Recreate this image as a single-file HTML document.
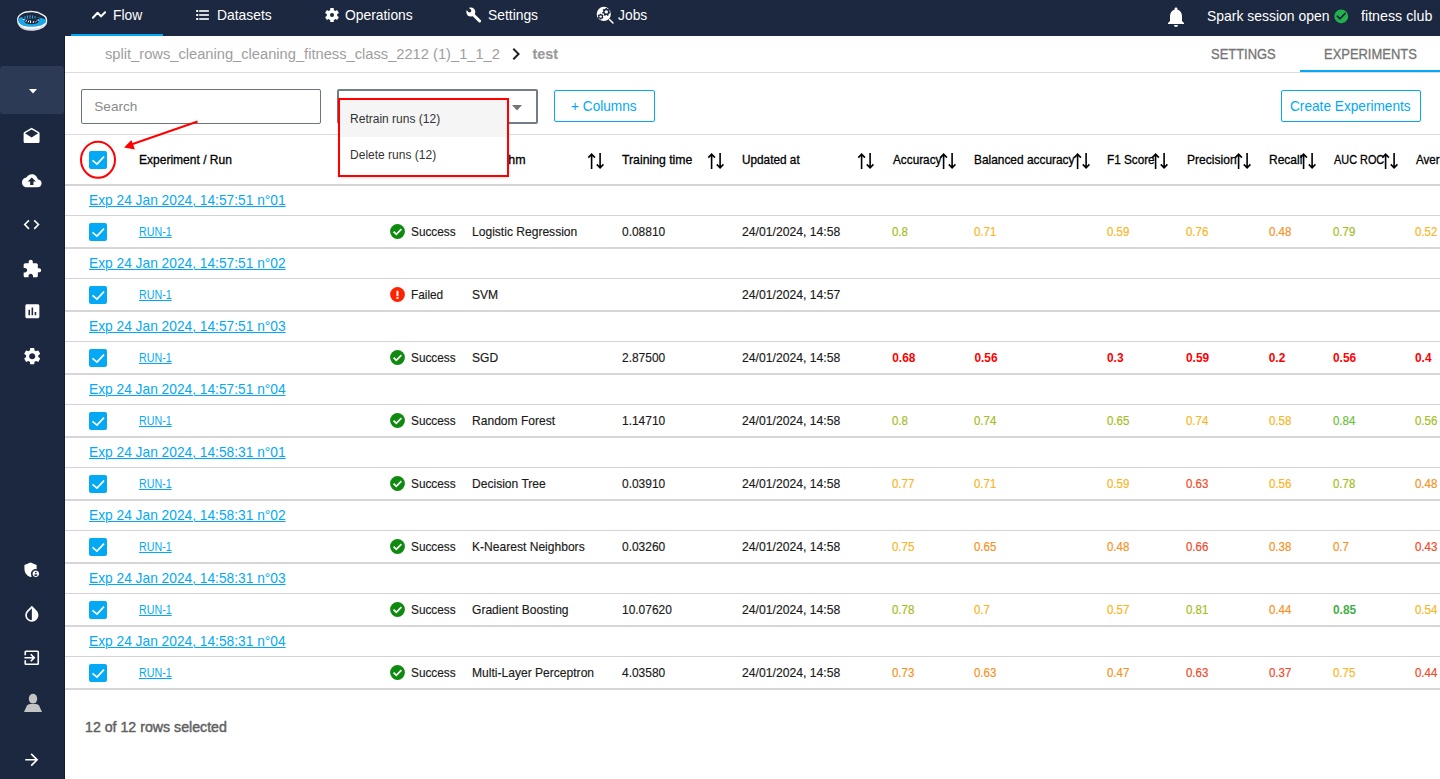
<!DOCTYPE html><html><head><meta charset="utf-8"><style>
*{box-sizing:border-box;margin:0;padding:0}
html,body{width:1440px;height:779px;overflow:hidden;background:#fff;font-family:"Liberation Sans",sans-serif}
.t{position:absolute;white-space:nowrap}
.a{position:absolute}
.hl{position:absolute;left:65px;width:1375px;background:#d6d6d6}
u{text-decoration:underline;text-underline-offset:1px;text-decoration-thickness:1px}
svg{position:absolute;overflow:visible}
</style></head><body>
<div class="a" style="left:0;top:0;width:1440px;height:36px;background:#1c2840"></div>
<div class="a" style="left:0;top:0;width:65px;height:779px;background:#1c2840"></div>
<div class="a" style="left:64px;top:36px;width:1px;height:743px;background:#141d30"></div>
<div class="a" style="left:0;top:66px;width:64px;height:48px;background:#2c3a56;border-radius:3px"></div>
<div class="a" style="left:71px;top:34px;width:92px;height:2px;background:#03a9f4"></div>
<div class="t" style="left:112.8px;top:5px;font-size:14.5px;line-height:20px;color:#fff;font-weight:normal;transform:scaleX(0.955);transform-origin:0 0;">Flow</div>
<div class="t" style="left:217.0px;top:5px;font-size:14.5px;line-height:20px;color:#fff;font-weight:normal;transform:scaleX(0.955);transform-origin:0 0;">Datasets</div>
<div class="t" style="left:345.25px;top:5px;font-size:14.5px;line-height:20px;color:#fff;font-weight:normal;transform:scaleX(0.955);transform-origin:0 0;">Operations</div>
<div class="t" style="left:487.5px;top:5px;font-size:14.5px;line-height:20px;color:#fff;font-weight:normal;transform:scaleX(0.955);transform-origin:0 0;">Settings</div>
<div class="t" style="left:618.25px;top:5px;font-size:14.5px;line-height:20px;color:#fff;font-weight:normal;transform:scaleX(0.955);transform-origin:0 0;">Jobs</div>
<div class="t" style="left:1207.2px;top:6px;font-size:14.5px;line-height:20px;color:#fff;font-weight:normal;transform:scaleX(0.962);transform-origin:0 0;">Spark session open</div>
<div class="t" style="left:1361.2px;top:6px;font-size:14.5px;line-height:20px;color:#fff;font-weight:normal;transform:scaleX(0.983);transform-origin:0 0;">fitness club</div>
<div class="t" style="left:105px;top:44px;font-size:15.5px;line-height:20px;color:#9e9e9e;font-weight:normal;transform:scaleX(0.947);transform-origin:0 0;">split_rows_cleaning_cleaning_fitness_class_2212 (1)_1_1_2</div>
<div class="t" style="left:532.5px;top:44px;font-size:14.3px;line-height:20px;color:#999;font-weight:bold;-webkit-text-stroke:0.15px #999;">test</div>
<div class="t" style="left:1210.8px;top:45px;font-size:13.8px;line-height:20px;color:#757575;font-weight:normal;-webkit-text-stroke:0.3px #757575;transform:scaleX(0.938);transform-origin:0 0;">SETTINGS</div>
<div class="t" style="left:1324.2px;top:45px;font-size:13.8px;line-height:20px;color:#757575;font-weight:normal;-webkit-text-stroke:0.3px #757575;transform:scaleX(0.938);transform-origin:0 0;">EXPERIMENTS</div>
<div class="a" style="left:1300px;top:70px;width:140px;height:2px;background:#03a9f4"></div>
<div class="hl" style="top:72px;height:1px;background:#dcdcdc"></div>
<div class="a" style="left:81px;top:89px;width:240px;height:35px;border:1px solid #6b757d;border-radius:2px"></div>
<div class="t" style="left:94.3px;top:97px;font-size:13.6px;line-height:20px;color:#8a8a8a;font-weight:normal;">Search</div>
<div class="a" style="left:337px;top:89px;width:201px;height:35px;border:2px solid #737d85;border-radius:2px"></div>
<svg style="left:511.5px;top:104.7px" width="10" height="6"><path d="M0 0h10L5 5.5z" fill="#757575"/></svg>
<div class="a" style="left:554px;top:90px;width:101px;height:32px;border:1px solid #03a9f4;border-radius:2px"></div>
<div class="t" style="left:570.75px;top:96px;font-size:14.3px;line-height:20px;color:#03a9f4;font-weight:normal;transform:scaleX(0.955);transform-origin:0 0;">+ Columns</div>
<div class="a" style="left:1281px;top:90px;width:140px;height:32px;border:1px solid #03a9f4;border-radius:2px"></div>
<div class="t" style="left:1290px;top:96px;font-size:14.3px;line-height:20px;color:#03a9f4;font-weight:normal;transform:scaleX(0.955);transform-origin:0 0;">Create Experiments</div>
<div class="hl" style="top:134px;height:1px;background:#dcdcdc"></div>
<div class="t" style="left:139.1px;top:150px;font-size:12.6px;line-height:20px;color:#000;font-weight:normal;-webkit-text-stroke:0.3px #000;transform:scaleX(0.9548);transform-origin:0 0;">Experiment / Run</div>
<div class="t" style="left:472.5px;top:150px;font-size:12.6px;line-height:20px;color:#000;font-weight:normal;-webkit-text-stroke:0.3px #000;transform:scaleX(0.9881);transform-origin:0 0;">Algorithm</div>
<div class="t" style="left:621.75px;top:150px;font-size:12.6px;line-height:20px;color:#000;font-weight:normal;-webkit-text-stroke:0.3px #000;transform:scaleX(0.9722);transform-origin:0 0;">Training time</div>
<div class="t" style="left:742px;top:150px;font-size:12.6px;line-height:20px;color:#000;font-weight:normal;-webkit-text-stroke:0.3px #000;transform:scaleX(0.9357);transform-origin:0 0;">Updated at</div>
<div class="t" style="left:892.5px;top:150px;font-size:12.6px;line-height:20px;color:#000;font-weight:normal;-webkit-text-stroke:0.3px #000;transform:scaleX(0.9349);transform-origin:0 0;">Accuracy</div>
<div class="t" style="left:974.2px;top:150px;font-size:12.6px;line-height:20px;color:#000;font-weight:normal;-webkit-text-stroke:0.3px #000;transform:scaleX(0.9444);transform-origin:0 0;">Balanced accuracy</div>
<div class="t" style="left:1107.1px;top:150px;font-size:12.6px;line-height:20px;color:#000;font-weight:normal;-webkit-text-stroke:0.3px #000;transform:scaleX(0.9317);transform-origin:0 0;">F1 Score</div>
<div class="t" style="left:1186.6px;top:150px;font-size:12.6px;line-height:20px;color:#000;font-weight:normal;-webkit-text-stroke:0.3px #000;transform:scaleX(0.9587);transform-origin:0 0;">Precision</div>
<div class="t" style="left:1268.8px;top:150px;font-size:12.6px;line-height:20px;color:#000;font-weight:normal;-webkit-text-stroke:0.3px #000;transform:scaleX(0.9532);transform-origin:0 0;">Recall</div>
<div class="t" style="left:1334px;top:150px;font-size:12.6px;line-height:20px;color:#000;font-weight:normal;-webkit-text-stroke:0.3px #000;transform:scaleX(0.8651);transform-origin:0 0;">AUC ROC</div>
<div class="t" style="left:1416px;top:150px;font-size:12.6px;line-height:20px;color:#000;font-weight:normal;-webkit-text-stroke:0.3px #000;transform:scaleX(0.923);transform-origin:0 0;">Average</div>
<svg style="left:587.7px;top:153px" width="16" height="16" viewBox="0 0 16 16"><path d="M3.6 1v15M0.3 4.6L3.6 1.2L6.9 4.6M12.1 0v15M8.8 11.4L12.1 14.8L15.4 11.4" stroke="#000" stroke-width="1.6" fill="none"/></svg>
<svg style="left:707.8px;top:153px" width="16" height="16" viewBox="0 0 16 16"><path d="M3.6 1v15M0.3 4.6L3.6 1.2L6.9 4.6M12.1 0v15M8.8 11.4L12.1 14.8L15.4 11.4" stroke="#000" stroke-width="1.6" fill="none"/></svg>
<svg style="left:857.8px;top:153px" width="16" height="16" viewBox="0 0 16 16"><path d="M3.6 1v15M0.3 4.6L3.6 1.2L6.9 4.6M12.1 0v15M8.8 11.4L12.1 14.8L15.4 11.4" stroke="#000" stroke-width="1.6" fill="none"/></svg>
<svg style="left:939.8px;top:153px" width="16" height="16" viewBox="0 0 16 16"><path d="M3.6 1v15M0.3 4.6L3.6 1.2L6.9 4.6M12.1 0v15M8.8 11.4L12.1 14.8L15.4 11.4" stroke="#000" stroke-width="1.6" fill="none"/></svg>
<svg style="left:1073.5px;top:153px" width="16" height="16" viewBox="0 0 16 16"><path d="M3.6 1v15M0.3 4.6L3.6 1.2L6.9 4.6M12.1 0v15M8.8 11.4L12.1 14.8L15.4 11.4" stroke="#000" stroke-width="1.6" fill="none"/></svg>
<svg style="left:1152.2px;top:153px" width="16" height="16" viewBox="0 0 16 16"><path d="M3.6 1v15M0.3 4.6L3.6 1.2L6.9 4.6M12.1 0v15M8.8 11.4L12.1 14.8L15.4 11.4" stroke="#000" stroke-width="1.6" fill="none"/></svg>
<svg style="left:1234.7px;top:153px" width="16" height="16" viewBox="0 0 16 16"><path d="M3.6 1v15M0.3 4.6L3.6 1.2L6.9 4.6M12.1 0v15M8.8 11.4L12.1 14.8L15.4 11.4" stroke="#000" stroke-width="1.6" fill="none"/></svg>
<svg style="left:1299.6px;top:153px" width="16" height="16" viewBox="0 0 16 16"><path d="M3.6 1v15M0.3 4.6L3.6 1.2L6.9 4.6M12.1 0v15M8.8 11.4L12.1 14.8L15.4 11.4" stroke="#000" stroke-width="1.6" fill="none"/></svg>
<svg style="left:1381.7px;top:153px" width="16" height="16" viewBox="0 0 16 16"><path d="M3.6 1v15M0.3 4.6L3.6 1.2L6.9 4.6M12.1 0v15M8.8 11.4L12.1 14.8L15.4 11.4" stroke="#000" stroke-width="1.6" fill="none"/></svg>
<div class="hl" style="top:184px;height:2px;background:#d4d4d4"></div>
<div class="a" style="left:89px;top:151px;width:18px;height:18px;background:#03a9f4;border-radius:2px"></div><svg style="left:89px;top:151px" width="18" height="18" viewBox="0 0 18 18"><path d="M3.5 9.4L8 13.2L15 5.6" stroke="#fff" stroke-width="1.7" fill="none"/></svg>
<div class="t" style="left:88.5px;top:190px;font-size:14.5px;line-height:20px;color:#03a9f4;font-weight:normal;transform:scaleX(0.948);transform-origin:0 0;"><u>Exp 24 Jan 2024, 14:57:51 n°01</u></div>
<div class="hl" style="top:215px;height:1px;background:#d4d4d4"></div>
<div class="a" style="left:89px;top:223px;width:18px;height:18px;background:#03a9f4;border-radius:2px"></div><svg style="left:89px;top:223px" width="18" height="18" viewBox="0 0 18 18"><path d="M3.5 9.4L8 13.2L15 5.6" stroke="#fff" stroke-width="1.7" fill="none"/></svg>
<div class="t" style="left:139.3px;top:222px;font-size:12px;line-height:20px;color:#03a9f4;font-weight:-webkit-text-stroke:0.15px #03a9f4;;transform:scaleX(0.89);transform-origin:0 0;"><u>RUN-1</u></div>
<svg style="left:390.2px;top:224.3px" width="15" height="15" viewBox="0 0 15 15"><circle cx="7.5" cy="7.5" r="7.4" fill="#0e8a0e"/><path d="M3.6 7.6L6.3 10.3L11.4 5.2" stroke="#fff" stroke-width="1.7" fill="none"/></svg>
<div class="t" style="left:411px;top:222px;font-size:12.2px;line-height:20px;color:#1a1a1a;font-weight:normal;-webkit-text-stroke:0.15px #1a1a1a;transform:scaleX(0.97);transform-origin:0 0;">Success</div>
<div class="t" style="left:472px;top:222px;font-size:12.2px;line-height:20px;color:#1a1a1a;font-weight:normal;-webkit-text-stroke:0.15px #1a1a1a;transform:scaleX(0.99);transform-origin:0 0;">Logistic Regression</div>
<div class="t" style="left:622px;top:222px;font-size:12.2px;line-height:20px;color:#1a1a1a;font-weight:normal;-webkit-text-stroke:0.15px #1a1a1a;transform:scaleX(0.98);transform-origin:0 0;">0.08810</div>
<div class="t" style="left:742px;top:222px;font-size:12.2px;line-height:20px;color:#1a1a1a;font-weight:normal;-webkit-text-stroke:0.15px #1a1a1a;">24/01/2024, 14:58</div>
<div class="t" style="left:892.25px;top:222px;font-size:12.2px;line-height:20px;color:#a6bd1e;font-weight:normal;-webkit-text-stroke:0.2px #a6bd1e;transform:scaleX(0.94);transform-origin:0 0;">0.8</div>
<div class="t" style="left:974.4px;top:222px;font-size:12.2px;line-height:20px;color:#fab624;font-weight:normal;-webkit-text-stroke:0.2px #fab624;transform:scaleX(0.94);transform-origin:0 0;">0.71</div>
<div class="t" style="left:1107px;top:222px;font-size:12.2px;line-height:20px;color:#fab624;font-weight:normal;-webkit-text-stroke:0.2px #fab624;transform:scaleX(0.94);transform-origin:0 0;">0.59</div>
<div class="t" style="left:1186px;top:222px;font-size:12.2px;line-height:20px;color:#fab624;font-weight:normal;-webkit-text-stroke:0.2px #fab624;transform:scaleX(0.94);transform-origin:0 0;">0.76</div>
<div class="t" style="left:1268.75px;top:222px;font-size:12.2px;line-height:20px;color:#f6931f;font-weight:normal;-webkit-text-stroke:0.2px #f6931f;transform:scaleX(0.94);transform-origin:0 0;">0.48</div>
<div class="t" style="left:1333px;top:222px;font-size:12.2px;line-height:20px;color:#a6bd1e;font-weight:normal;-webkit-text-stroke:0.2px #a6bd1e;transform:scaleX(0.94);transform-origin:0 0;">0.79</div>
<div class="t" style="left:1415px;top:222px;font-size:12.2px;line-height:20px;color:#fab624;font-weight:normal;-webkit-text-stroke:0.2px #fab624;transform:scaleX(0.94);transform-origin:0 0;">0.52</div>
<div class="hl" style="top:247px;height:2px;background:#d6d6d6"></div>
<div class="t" style="left:88.5px;top:253px;font-size:14.5px;line-height:20px;color:#03a9f4;font-weight:normal;transform:scaleX(0.948);transform-origin:0 0;"><u>Exp 24 Jan 2024, 14:57:51 n°02</u></div>
<div class="hl" style="top:278px;height:1px;background:#d4d4d4"></div>
<div class="a" style="left:89px;top:286px;width:18px;height:18px;background:#03a9f4;border-radius:2px"></div><svg style="left:89px;top:286px" width="18" height="18" viewBox="0 0 18 18"><path d="M3.5 9.4L8 13.2L15 5.6" stroke="#fff" stroke-width="1.7" fill="none"/></svg>
<div class="t" style="left:139.3px;top:285px;font-size:12px;line-height:20px;color:#03a9f4;font-weight:-webkit-text-stroke:0.15px #03a9f4;;transform:scaleX(0.89);transform-origin:0 0;"><u>RUN-1</u></div>
<svg style="left:390.2px;top:287.3px" width="15" height="15" viewBox="0 0 15 15"><circle cx="7.5" cy="7.5" r="7.4" fill="#fe2200"/><rect x="6.5" y="3.8" width="2" height="5.4" fill="#fff"/><rect x="6.5" y="10" width="2" height="1.9" fill="#fff"/></svg>
<div class="t" style="left:411px;top:285px;font-size:12.2px;line-height:20px;color:#1a1a1a;font-weight:normal;-webkit-text-stroke:0.15px #1a1a1a;transform:scaleX(0.97);transform-origin:0 0;">Failed</div>
<div class="t" style="left:472px;top:285px;font-size:12.2px;line-height:20px;color:#1a1a1a;font-weight:normal;-webkit-text-stroke:0.15px #1a1a1a;transform:scaleX(0.99);transform-origin:0 0;">SVM</div>
<div class="t" style="left:742px;top:285px;font-size:12.2px;line-height:20px;color:#1a1a1a;font-weight:normal;-webkit-text-stroke:0.15px #1a1a1a;">24/01/2024, 14:57</div>
<div class="hl" style="top:310px;height:2px;background:#d6d6d6"></div>
<div class="t" style="left:88.5px;top:316px;font-size:14.5px;line-height:20px;color:#03a9f4;font-weight:normal;transform:scaleX(0.948);transform-origin:0 0;"><u>Exp 24 Jan 2024, 14:57:51 n°03</u></div>
<div class="hl" style="top:341px;height:1px;background:#d4d4d4"></div>
<div class="a" style="left:89px;top:349px;width:18px;height:18px;background:#03a9f4;border-radius:2px"></div><svg style="left:89px;top:349px" width="18" height="18" viewBox="0 0 18 18"><path d="M3.5 9.4L8 13.2L15 5.6" stroke="#fff" stroke-width="1.7" fill="none"/></svg>
<div class="t" style="left:139.3px;top:348px;font-size:12px;line-height:20px;color:#03a9f4;font-weight:-webkit-text-stroke:0.15px #03a9f4;;transform:scaleX(0.89);transform-origin:0 0;"><u>RUN-1</u></div>
<svg style="left:390.2px;top:350.3px" width="15" height="15" viewBox="0 0 15 15"><circle cx="7.5" cy="7.5" r="7.4" fill="#0e8a0e"/><path d="M3.6 7.6L6.3 10.3L11.4 5.2" stroke="#fff" stroke-width="1.7" fill="none"/></svg>
<div class="t" style="left:411px;top:348px;font-size:12.2px;line-height:20px;color:#1a1a1a;font-weight:normal;-webkit-text-stroke:0.15px #1a1a1a;transform:scaleX(0.97);transform-origin:0 0;">Success</div>
<div class="t" style="left:472px;top:348px;font-size:12.2px;line-height:20px;color:#1a1a1a;font-weight:normal;-webkit-text-stroke:0.15px #1a1a1a;transform:scaleX(0.99);transform-origin:0 0;">SGD</div>
<div class="t" style="left:622px;top:348px;font-size:12.2px;line-height:20px;color:#1a1a1a;font-weight:normal;-webkit-text-stroke:0.15px #1a1a1a;transform:scaleX(0.98);transform-origin:0 0;">2.87500</div>
<div class="t" style="left:742px;top:348px;font-size:12.2px;line-height:20px;color:#1a1a1a;font-weight:normal;-webkit-text-stroke:0.15px #1a1a1a;">24/01/2024, 14:58</div>
<div class="t" style="left:892.25px;top:348px;font-size:11.9px;line-height:20px;color:#ff0000;font-weight:bold;transform:scaleX(1.0);transform-origin:0 0;">0.68</div>
<div class="t" style="left:974.4px;top:348px;font-size:11.9px;line-height:20px;color:#ff0000;font-weight:bold;transform:scaleX(1.0);transform-origin:0 0;">0.56</div>
<div class="t" style="left:1107px;top:348px;font-size:11.9px;line-height:20px;color:#ff0000;font-weight:bold;transform:scaleX(1.0);transform-origin:0 0;">0.3</div>
<div class="t" style="left:1186px;top:348px;font-size:11.9px;line-height:20px;color:#ff0000;font-weight:bold;transform:scaleX(1.0);transform-origin:0 0;">0.59</div>
<div class="t" style="left:1268.75px;top:348px;font-size:11.9px;line-height:20px;color:#ff0000;font-weight:bold;transform:scaleX(1.0);transform-origin:0 0;">0.2</div>
<div class="t" style="left:1333px;top:348px;font-size:11.9px;line-height:20px;color:#ff0000;font-weight:bold;transform:scaleX(1.0);transform-origin:0 0;">0.56</div>
<div class="t" style="left:1415px;top:348px;font-size:11.9px;line-height:20px;color:#ff0000;font-weight:bold;transform:scaleX(1.0);transform-origin:0 0;">0.4</div>
<div class="hl" style="top:373px;height:2px;background:#d6d6d6"></div>
<div class="t" style="left:88.5px;top:379px;font-size:14.5px;line-height:20px;color:#03a9f4;font-weight:normal;transform:scaleX(0.948);transform-origin:0 0;"><u>Exp 24 Jan 2024, 14:57:51 n°04</u></div>
<div class="hl" style="top:404px;height:1px;background:#d4d4d4"></div>
<div class="a" style="left:89px;top:412px;width:18px;height:18px;background:#03a9f4;border-radius:2px"></div><svg style="left:89px;top:412px" width="18" height="18" viewBox="0 0 18 18"><path d="M3.5 9.4L8 13.2L15 5.6" stroke="#fff" stroke-width="1.7" fill="none"/></svg>
<div class="t" style="left:139.3px;top:411px;font-size:12px;line-height:20px;color:#03a9f4;font-weight:-webkit-text-stroke:0.15px #03a9f4;;transform:scaleX(0.89);transform-origin:0 0;"><u>RUN-1</u></div>
<svg style="left:390.2px;top:413.3px" width="15" height="15" viewBox="0 0 15 15"><circle cx="7.5" cy="7.5" r="7.4" fill="#0e8a0e"/><path d="M3.6 7.6L6.3 10.3L11.4 5.2" stroke="#fff" stroke-width="1.7" fill="none"/></svg>
<div class="t" style="left:411px;top:411px;font-size:12.2px;line-height:20px;color:#1a1a1a;font-weight:normal;-webkit-text-stroke:0.15px #1a1a1a;transform:scaleX(0.97);transform-origin:0 0;">Success</div>
<div class="t" style="left:472px;top:411px;font-size:12.2px;line-height:20px;color:#1a1a1a;font-weight:normal;-webkit-text-stroke:0.15px #1a1a1a;transform:scaleX(0.99);transform-origin:0 0;">Random Forest</div>
<div class="t" style="left:622px;top:411px;font-size:12.2px;line-height:20px;color:#1a1a1a;font-weight:normal;-webkit-text-stroke:0.15px #1a1a1a;transform:scaleX(0.98);transform-origin:0 0;">1.14710</div>
<div class="t" style="left:742px;top:411px;font-size:12.2px;line-height:20px;color:#1a1a1a;font-weight:normal;-webkit-text-stroke:0.15px #1a1a1a;">24/01/2024, 14:58</div>
<div class="t" style="left:892.25px;top:411px;font-size:12.2px;line-height:20px;color:#a6bd1e;font-weight:normal;-webkit-text-stroke:0.2px #a6bd1e;transform:scaleX(0.94);transform-origin:0 0;">0.8</div>
<div class="t" style="left:974.4px;top:411px;font-size:12.2px;line-height:20px;color:#a6bd1e;font-weight:normal;-webkit-text-stroke:0.2px #a6bd1e;transform:scaleX(0.94);transform-origin:0 0;">0.74</div>
<div class="t" style="left:1107px;top:411px;font-size:12.2px;line-height:20px;color:#a6bd1e;font-weight:normal;-webkit-text-stroke:0.2px #a6bd1e;transform:scaleX(0.94);transform-origin:0 0;">0.65</div>
<div class="t" style="left:1186px;top:411px;font-size:12.2px;line-height:20px;color:#fab624;font-weight:normal;-webkit-text-stroke:0.2px #fab624;transform:scaleX(0.94);transform-origin:0 0;">0.74</div>
<div class="t" style="left:1268.75px;top:411px;font-size:12.2px;line-height:20px;color:#fab624;font-weight:normal;-webkit-text-stroke:0.2px #fab624;transform:scaleX(0.94);transform-origin:0 0;">0.58</div>
<div class="t" style="left:1333px;top:411px;font-size:12.2px;line-height:20px;color:#6cbf3c;font-weight:normal;-webkit-text-stroke:0.2px #6cbf3c;transform:scaleX(0.94);transform-origin:0 0;">0.84</div>
<div class="t" style="left:1415px;top:411px;font-size:12.2px;line-height:20px;color:#a6bd1e;font-weight:normal;-webkit-text-stroke:0.2px #a6bd1e;transform:scaleX(0.94);transform-origin:0 0;">0.56</div>
<div class="hl" style="top:436px;height:2px;background:#d6d6d6"></div>
<div class="t" style="left:88.5px;top:442px;font-size:14.5px;line-height:20px;color:#03a9f4;font-weight:normal;transform:scaleX(0.948);transform-origin:0 0;"><u>Exp 24 Jan 2024, 14:58:31 n°01</u></div>
<div class="hl" style="top:467px;height:1px;background:#d4d4d4"></div>
<div class="a" style="left:89px;top:475px;width:18px;height:18px;background:#03a9f4;border-radius:2px"></div><svg style="left:89px;top:475px" width="18" height="18" viewBox="0 0 18 18"><path d="M3.5 9.4L8 13.2L15 5.6" stroke="#fff" stroke-width="1.7" fill="none"/></svg>
<div class="t" style="left:139.3px;top:474px;font-size:12px;line-height:20px;color:#03a9f4;font-weight:-webkit-text-stroke:0.15px #03a9f4;;transform:scaleX(0.89);transform-origin:0 0;"><u>RUN-1</u></div>
<svg style="left:390.2px;top:476.3px" width="15" height="15" viewBox="0 0 15 15"><circle cx="7.5" cy="7.5" r="7.4" fill="#0e8a0e"/><path d="M3.6 7.6L6.3 10.3L11.4 5.2" stroke="#fff" stroke-width="1.7" fill="none"/></svg>
<div class="t" style="left:411px;top:474px;font-size:12.2px;line-height:20px;color:#1a1a1a;font-weight:normal;-webkit-text-stroke:0.15px #1a1a1a;transform:scaleX(0.97);transform-origin:0 0;">Success</div>
<div class="t" style="left:472px;top:474px;font-size:12.2px;line-height:20px;color:#1a1a1a;font-weight:normal;-webkit-text-stroke:0.15px #1a1a1a;transform:scaleX(0.99);transform-origin:0 0;">Decision Tree</div>
<div class="t" style="left:622px;top:474px;font-size:12.2px;line-height:20px;color:#1a1a1a;font-weight:normal;-webkit-text-stroke:0.15px #1a1a1a;transform:scaleX(0.98);transform-origin:0 0;">0.03910</div>
<div class="t" style="left:742px;top:474px;font-size:12.2px;line-height:20px;color:#1a1a1a;font-weight:normal;-webkit-text-stroke:0.15px #1a1a1a;">24/01/2024, 14:58</div>
<div class="t" style="left:892.25px;top:474px;font-size:12.2px;line-height:20px;color:#fab624;font-weight:normal;-webkit-text-stroke:0.2px #fab624;transform:scaleX(0.94);transform-origin:0 0;">0.77</div>
<div class="t" style="left:974.4px;top:474px;font-size:12.2px;line-height:20px;color:#fab624;font-weight:normal;-webkit-text-stroke:0.2px #fab624;transform:scaleX(0.94);transform-origin:0 0;">0.71</div>
<div class="t" style="left:1107px;top:474px;font-size:12.2px;line-height:20px;color:#fab624;font-weight:normal;-webkit-text-stroke:0.2px #fab624;transform:scaleX(0.94);transform-origin:0 0;">0.59</div>
<div class="t" style="left:1186px;top:474px;font-size:12.2px;line-height:20px;color:#f24a2a;font-weight:normal;-webkit-text-stroke:0.2px #f24a2a;transform:scaleX(0.94);transform-origin:0 0;">0.63</div>
<div class="t" style="left:1268.75px;top:474px;font-size:12.2px;line-height:20px;color:#fab624;font-weight:normal;-webkit-text-stroke:0.2px #fab624;transform:scaleX(0.94);transform-origin:0 0;">0.56</div>
<div class="t" style="left:1333px;top:474px;font-size:12.2px;line-height:20px;color:#a6bd1e;font-weight:normal;-webkit-text-stroke:0.2px #a6bd1e;transform:scaleX(0.94);transform-origin:0 0;">0.78</div>
<div class="t" style="left:1415px;top:474px;font-size:12.2px;line-height:20px;color:#f6931f;font-weight:normal;-webkit-text-stroke:0.2px #f6931f;transform:scaleX(0.94);transform-origin:0 0;">0.48</div>
<div class="hl" style="top:499px;height:2px;background:#d6d6d6"></div>
<div class="t" style="left:88.5px;top:505px;font-size:14.5px;line-height:20px;color:#03a9f4;font-weight:normal;transform:scaleX(0.948);transform-origin:0 0;"><u>Exp 24 Jan 2024, 14:58:31 n°02</u></div>
<div class="hl" style="top:530px;height:1px;background:#d4d4d4"></div>
<div class="a" style="left:89px;top:538px;width:18px;height:18px;background:#03a9f4;border-radius:2px"></div><svg style="left:89px;top:538px" width="18" height="18" viewBox="0 0 18 18"><path d="M3.5 9.4L8 13.2L15 5.6" stroke="#fff" stroke-width="1.7" fill="none"/></svg>
<div class="t" style="left:139.3px;top:537px;font-size:12px;line-height:20px;color:#03a9f4;font-weight:-webkit-text-stroke:0.15px #03a9f4;;transform:scaleX(0.89);transform-origin:0 0;"><u>RUN-1</u></div>
<svg style="left:390.2px;top:539.3px" width="15" height="15" viewBox="0 0 15 15"><circle cx="7.5" cy="7.5" r="7.4" fill="#0e8a0e"/><path d="M3.6 7.6L6.3 10.3L11.4 5.2" stroke="#fff" stroke-width="1.7" fill="none"/></svg>
<div class="t" style="left:411px;top:537px;font-size:12.2px;line-height:20px;color:#1a1a1a;font-weight:normal;-webkit-text-stroke:0.15px #1a1a1a;transform:scaleX(0.97);transform-origin:0 0;">Success</div>
<div class="t" style="left:472px;top:537px;font-size:12.2px;line-height:20px;color:#1a1a1a;font-weight:normal;-webkit-text-stroke:0.15px #1a1a1a;transform:scaleX(0.99);transform-origin:0 0;">K-Nearest Neighbors</div>
<div class="t" style="left:622px;top:537px;font-size:12.2px;line-height:20px;color:#1a1a1a;font-weight:normal;-webkit-text-stroke:0.15px #1a1a1a;transform:scaleX(0.98);transform-origin:0 0;">0.03260</div>
<div class="t" style="left:742px;top:537px;font-size:12.2px;line-height:20px;color:#1a1a1a;font-weight:normal;-webkit-text-stroke:0.15px #1a1a1a;">24/01/2024, 14:58</div>
<div class="t" style="left:892.25px;top:537px;font-size:12.2px;line-height:20px;color:#fab624;font-weight:normal;-webkit-text-stroke:0.2px #fab624;transform:scaleX(0.94);transform-origin:0 0;">0.75</div>
<div class="t" style="left:974.4px;top:537px;font-size:12.2px;line-height:20px;color:#f6931f;font-weight:normal;-webkit-text-stroke:0.2px #f6931f;transform:scaleX(0.94);transform-origin:0 0;">0.65</div>
<div class="t" style="left:1107px;top:537px;font-size:12.2px;line-height:20px;color:#f6931f;font-weight:normal;-webkit-text-stroke:0.2px #f6931f;transform:scaleX(0.94);transform-origin:0 0;">0.48</div>
<div class="t" style="left:1186px;top:537px;font-size:12.2px;line-height:20px;color:#f24a2a;font-weight:normal;-webkit-text-stroke:0.2px #f24a2a;transform:scaleX(0.94);transform-origin:0 0;">0.66</div>
<div class="t" style="left:1268.75px;top:537px;font-size:12.2px;line-height:20px;color:#f6931f;font-weight:normal;-webkit-text-stroke:0.2px #f6931f;transform:scaleX(0.94);transform-origin:0 0;">0.38</div>
<div class="t" style="left:1333px;top:537px;font-size:12.2px;line-height:20px;color:#f6931f;font-weight:normal;-webkit-text-stroke:0.2px #f6931f;transform:scaleX(0.94);transform-origin:0 0;">0.7</div>
<div class="t" style="left:1415px;top:537px;font-size:12.2px;line-height:20px;color:#f24a2a;font-weight:normal;-webkit-text-stroke:0.2px #f24a2a;transform:scaleX(0.94);transform-origin:0 0;">0.43</div>
<div class="hl" style="top:562px;height:2px;background:#d6d6d6"></div>
<div class="t" style="left:88.5px;top:568px;font-size:14.5px;line-height:20px;color:#03a9f4;font-weight:normal;transform:scaleX(0.948);transform-origin:0 0;"><u>Exp 24 Jan 2024, 14:58:31 n°03</u></div>
<div class="hl" style="top:593px;height:1px;background:#d4d4d4"></div>
<div class="a" style="left:89px;top:601px;width:18px;height:18px;background:#03a9f4;border-radius:2px"></div><svg style="left:89px;top:601px" width="18" height="18" viewBox="0 0 18 18"><path d="M3.5 9.4L8 13.2L15 5.6" stroke="#fff" stroke-width="1.7" fill="none"/></svg>
<div class="t" style="left:139.3px;top:600px;font-size:12px;line-height:20px;color:#03a9f4;font-weight:-webkit-text-stroke:0.15px #03a9f4;;transform:scaleX(0.89);transform-origin:0 0;"><u>RUN-1</u></div>
<svg style="left:390.2px;top:602.3px" width="15" height="15" viewBox="0 0 15 15"><circle cx="7.5" cy="7.5" r="7.4" fill="#0e8a0e"/><path d="M3.6 7.6L6.3 10.3L11.4 5.2" stroke="#fff" stroke-width="1.7" fill="none"/></svg>
<div class="t" style="left:411px;top:600px;font-size:12.2px;line-height:20px;color:#1a1a1a;font-weight:normal;-webkit-text-stroke:0.15px #1a1a1a;transform:scaleX(0.97);transform-origin:0 0;">Success</div>
<div class="t" style="left:472px;top:600px;font-size:12.2px;line-height:20px;color:#1a1a1a;font-weight:normal;-webkit-text-stroke:0.15px #1a1a1a;transform:scaleX(0.99);transform-origin:0 0;">Gradient Boosting</div>
<div class="t" style="left:622px;top:600px;font-size:12.2px;line-height:20px;color:#1a1a1a;font-weight:normal;-webkit-text-stroke:0.15px #1a1a1a;transform:scaleX(0.98);transform-origin:0 0;">10.07620</div>
<div class="t" style="left:742px;top:600px;font-size:12.2px;line-height:20px;color:#1a1a1a;font-weight:normal;-webkit-text-stroke:0.15px #1a1a1a;">24/01/2024, 14:58</div>
<div class="t" style="left:892.25px;top:600px;font-size:12.2px;line-height:20px;color:#a6bd1e;font-weight:normal;-webkit-text-stroke:0.2px #a6bd1e;transform:scaleX(0.94);transform-origin:0 0;">0.78</div>
<div class="t" style="left:974.4px;top:600px;font-size:12.2px;line-height:20px;color:#fab624;font-weight:normal;-webkit-text-stroke:0.2px #fab624;transform:scaleX(0.94);transform-origin:0 0;">0.7</div>
<div class="t" style="left:1107px;top:600px;font-size:12.2px;line-height:20px;color:#fab624;font-weight:normal;-webkit-text-stroke:0.2px #fab624;transform:scaleX(0.94);transform-origin:0 0;">0.57</div>
<div class="t" style="left:1186px;top:600px;font-size:12.2px;line-height:20px;color:#a6bd1e;font-weight:normal;-webkit-text-stroke:0.2px #a6bd1e;transform:scaleX(0.94);transform-origin:0 0;">0.81</div>
<div class="t" style="left:1268.75px;top:600px;font-size:12.2px;line-height:20px;color:#f6931f;font-weight:normal;-webkit-text-stroke:0.2px #f6931f;transform:scaleX(0.94);transform-origin:0 0;">0.44</div>
<div class="t" style="left:1333px;top:600px;font-size:11.9px;line-height:20px;color:#43b047;font-weight:bold;transform:scaleX(1.0);transform-origin:0 0;">0.85</div>
<div class="t" style="left:1415px;top:600px;font-size:12.2px;line-height:20px;color:#fab624;font-weight:normal;-webkit-text-stroke:0.2px #fab624;transform:scaleX(0.94);transform-origin:0 0;">0.54</div>
<div class="hl" style="top:625px;height:2px;background:#d6d6d6"></div>
<div class="t" style="left:88.5px;top:631px;font-size:14.5px;line-height:20px;color:#03a9f4;font-weight:normal;transform:scaleX(0.948);transform-origin:0 0;"><u>Exp 24 Jan 2024, 14:58:31 n°04</u></div>
<div class="hl" style="top:656px;height:1px;background:#d4d4d4"></div>
<div class="a" style="left:89px;top:664px;width:18px;height:18px;background:#03a9f4;border-radius:2px"></div><svg style="left:89px;top:664px" width="18" height="18" viewBox="0 0 18 18"><path d="M3.5 9.4L8 13.2L15 5.6" stroke="#fff" stroke-width="1.7" fill="none"/></svg>
<div class="t" style="left:139.3px;top:663px;font-size:12px;line-height:20px;color:#03a9f4;font-weight:-webkit-text-stroke:0.15px #03a9f4;;transform:scaleX(0.89);transform-origin:0 0;"><u>RUN-1</u></div>
<svg style="left:390.2px;top:665.3px" width="15" height="15" viewBox="0 0 15 15"><circle cx="7.5" cy="7.5" r="7.4" fill="#0e8a0e"/><path d="M3.6 7.6L6.3 10.3L11.4 5.2" stroke="#fff" stroke-width="1.7" fill="none"/></svg>
<div class="t" style="left:411px;top:663px;font-size:12.2px;line-height:20px;color:#1a1a1a;font-weight:normal;-webkit-text-stroke:0.15px #1a1a1a;transform:scaleX(0.97);transform-origin:0 0;">Success</div>
<div class="t" style="left:472px;top:663px;font-size:12.2px;line-height:20px;color:#1a1a1a;font-weight:normal;-webkit-text-stroke:0.15px #1a1a1a;transform:scaleX(0.99);transform-origin:0 0;">Multi-Layer Perceptron</div>
<div class="t" style="left:622px;top:663px;font-size:12.2px;line-height:20px;color:#1a1a1a;font-weight:normal;-webkit-text-stroke:0.15px #1a1a1a;transform:scaleX(0.98);transform-origin:0 0;">4.03580</div>
<div class="t" style="left:742px;top:663px;font-size:12.2px;line-height:20px;color:#1a1a1a;font-weight:normal;-webkit-text-stroke:0.15px #1a1a1a;">24/01/2024, 14:58</div>
<div class="t" style="left:892.25px;top:663px;font-size:12.2px;line-height:20px;color:#f6931f;font-weight:normal;-webkit-text-stroke:0.2px #f6931f;transform:scaleX(0.94);transform-origin:0 0;">0.73</div>
<div class="t" style="left:974.4px;top:663px;font-size:12.2px;line-height:20px;color:#f6931f;font-weight:normal;-webkit-text-stroke:0.2px #f6931f;transform:scaleX(0.94);transform-origin:0 0;">0.63</div>
<div class="t" style="left:1107px;top:663px;font-size:12.2px;line-height:20px;color:#f6931f;font-weight:normal;-webkit-text-stroke:0.2px #f6931f;transform:scaleX(0.94);transform-origin:0 0;">0.47</div>
<div class="t" style="left:1186px;top:663px;font-size:12.2px;line-height:20px;color:#f24a2a;font-weight:normal;-webkit-text-stroke:0.2px #f24a2a;transform:scaleX(0.94);transform-origin:0 0;">0.63</div>
<div class="t" style="left:1268.75px;top:663px;font-size:12.2px;line-height:20px;color:#f24a2a;font-weight:normal;-webkit-text-stroke:0.2px #f24a2a;transform:scaleX(0.94);transform-origin:0 0;">0.37</div>
<div class="t" style="left:1333px;top:663px;font-size:12.2px;line-height:20px;color:#fab624;font-weight:normal;-webkit-text-stroke:0.2px #fab624;transform:scaleX(0.94);transform-origin:0 0;">0.75</div>
<div class="t" style="left:1415px;top:663px;font-size:12.2px;line-height:20px;color:#f24a2a;font-weight:normal;-webkit-text-stroke:0.2px #f24a2a;transform:scaleX(0.94);transform-origin:0 0;">0.44</div>
<div class="hl" style="top:688px;height:2px;background:#d6d6d6"></div>
<div class="t" style="left:85.3px;top:717px;font-size:14.5px;line-height:20px;color:#616161;font-weight:normal;-webkit-text-stroke:0.45px #616161;transform:scaleX(0.978);transform-origin:0 0;">12 of 12 rows selected</div>
<svg style="left:28.5px;top:88.5px" width="8" height="5"><path d="M0 0h8L4 4.5z" fill="#fff"/></svg>
<svg style="left:22.40px;top:127.20px" width="19.20" height="19.20" viewBox="0 0 24 24"><path d="M21.99 8c0-.72-.37-1.35-.94-1.7L12 1 2.95 6.3C2.38 6.65 2 7.28 2 8v10c0 1.1.9 2 2 2h16c1.1 0 2-.9 2-2l-.01-10zM12 13L3.74 7.84 12 3l8.26 4.84L12 13z" fill="#fff"/></svg>
<svg style="left:22.40px;top:170.70px" width="19.60" height="19.60" viewBox="0 0 24 24"><path d="M19.35 10.04C18.67 6.59 15.64 4 12 4 9.11 4 6.6 5.64 5.35 8.04 2.34 8.36 0 10.91 0 14c0 3.31 2.69 6 6 6h13c2.76 0 5-2.24 5-5 0-2.64-2.05-4.78-4.65-4.96zM14 13v4h-4v-4H7l5-5 5 5h-3z" fill="#fff"/></svg>
<svg style="left:22.40px;top:215.20px" width="19.20" height="19.20" viewBox="0 0 24 24"><path d="M9.4 16.6L4.8 12l4.6-4.6L8 6l-6 6 6 6 1.4-1.4zm5.2 0l4.6-4.6-4.6-4.6L16 6l6 6-6 6-1.4-1.4z" fill="#fff"/></svg>
<svg style="left:21.80px;top:259.20px" width="20.00" height="20.00" viewBox="0 0 24 24"><path d="M20.5 11H19V7c0-1.1-.9-2-2-2h-4V3.5C13 2.12 11.88 1 10.5 1S8 2.12 8 3.5V5H4c-1.1 0-1.99.9-1.99 2v3.8H3.5c1.49 0 2.7 1.21 2.7 2.7s-1.21 2.7-2.7 2.7H2V20c0 1.1.9 2 2 2h3.8v-1.5c0-1.49 1.21-2.7 2.7-2.7 1.49 0 2.7 1.21 2.7 2.7V22H17c1.1 0 2-.9 2-2v-4h1.5c1.38 0 2.5-1.12 2.5-2.5S21.88 11 20.5 11z" fill="#fff"/></svg>
<svg style="left:22.70px;top:302.40px" width="18.70" height="18.70" viewBox="0 0 24 24"><path d="M19 3H5c-1.1 0-2 .9-2 2v14c0 1.1.9 2 2 2h14c1.1 0 2-.9 2-2V5c0-1.1-.9-2-2-2zM9 17H7v-7h2v7zm4 0h-2V7h2v10zm4 0h-2v-4h2v4z" fill="#fff"/></svg>
<svg style="left:21.80px;top:346.10px" width="20.40" height="20.40" viewBox="0 0 24 24"><path d="M19.14 12.94c.04-.3.06-.61.06-.94 0-.32-.02-.64-.07-.94l2.03-1.58c.18-.14.23-.41.12-.61l-1.92-3.32c-.12-.22-.37-.29-.59-.22l-2.39.96c-.5-.38-1.03-.7-1.62-.94l-.36-2.54c-.04-.24-.24-.41-.48-.41h-3.84c-.24 0-.43.17-.47.41l-.36 2.54c-.59.24-1.13.57-1.62.94l-2.39-.96c-.22-.08-.47 0-.59.22L2.74 8.87c-.12.21-.08.47.12.61l2.03 1.58c-.05.3-.09.63-.09.94s.02.64.07.94l-2.03 1.58c-.18.14-.23.41-.12.61l1.92 3.32c.12.22.37.29.59.22l2.39-.96c.5.38 1.03.7 1.62.94l.36 2.54c.05.24.24.41.48.41h3.84c.24 0 .44-.17.47-.41l.36-2.54c.59-.24 1.13-.56 1.62-.94l2.39.96c.22.08.47 0 .59-.22l1.92-3.32c.12-.22.07-.47-.12-.61l-2.01-1.58zM12 15.6c-1.98 0-3.6-1.62-3.6-3.6s1.62-3.6 3.6-3.6 3.6 1.62 3.6 3.6-1.62 3.6-3.6 3.6z" fill="#fff"/></svg>
<svg style="left:22.30px;top:559.60px" width="19.50" height="19.50" viewBox="0 0 24 24"><path d="M17 11c.34 0 .67.04 1 .09V6.27L10.5 3 3 6.27v4.91c0 4.54 3.2 8.79 7.5 9.82.55-.13 1.08-.32 1.6-.55-.69-.98-1.1-2.17-1.1-3.45 0-3.31 2.69-6 6-6zM17 13c-2.21 0-4 1.79-4 4s1.79 4 4 4 4-1.79 4-4-1.79-4-4-4zm0 1.38c.62 0 1.12.51 1.12 1.12s-.51 1.12-1.12 1.12-1.12-.51-1.12-1.12.5-1.12 1.12-1.12zm0 5.37c-.93 0-1.74-.46-2.24-1.17.05-.72 1.51-1.08 2.24-1.08s2.19.36 2.24 1.08c-.5.71-1.31 1.17-2.24 1.17z" fill="#fff"/></svg>
<svg style="left:22.20px;top:603.60px" width="19.70" height="19.70" viewBox="0 0 24 24"><path d="M17.66 7.93L12 2.27 6.34 7.93c-3.12 3.12-3.12 8.19 0 11.31C7.9 20.8 9.95 21.58 12 21.58c2.05 0 4.1-.78 5.66-2.34 3.12-3.12 3.12-8.19 0-11.31zM12 19.59c-1.6 0-3.11-.62-4.24-1.76C6.62 16.69 6 15.19 6 13.59s.62-3.11 1.76-4.24L12 5.1v14.49z" fill="#fff"/></svg>
<svg style="left:22.30px;top:647.80px" width="19.50" height="19.50" viewBox="0 0 24 24"><path d="M10.09 15.59L11.5 17l5-5-5-5-1.41 1.41L12.67 11H3v2h9.67l-2.58 2.59zM19 3H5c-1.11 0-2 .9-2 2v4h2V5h14v14H5v-4H3v4c0 1.1.89 2 2 2h14c1.1 0 2-.9 2-2V5c0-1.1-.9-2-2-2z" fill="#fff"/></svg>
<svg style="left:0;top:0" width="65" height="779"><ellipse cx="33" cy="698.7" rx="4.2" ry="4.9" fill="#c4c4c4"/><path d="M24 712L27 705.5Q28 704 30 704H36Q38 704 39 705.5L42 712z" fill="#c4c4c4"/></svg>
<svg style="left:22.35px;top:749.75px" width="19.50" height="19.50" viewBox="0 0 24 24"><path d="M12 4l-1.41 1.41L16.17 11H4v2h12.17l-5.58 5.59L12 20l8-8z" fill="#fff"/></svg>
<svg style="left:0;top:0" width="65" height="40"><path d="M17 20C17 14 24 10.7 31 10.8C38 10.9 41 13 45 15.5C47.5 17 47.5 21 47 23C46 28 38 30.8 31 30.8C22 30.8 17 26 17 20Z" fill="#dcdcea"/><path d="M17.6 19.5C17.6 14.5 24 11.3 31 11.4C38 11.5 41 13.5 44.6 15.8C46.8 17.2 46.9 20 46.5 22C45.5 26.5 38 28.6 31 28.6C22 28.6 17.6 24.5 17.6 19.5Z" fill="#fff"/><path d="M18.4 19.2C18.6 15 24 12.2 31 12.2C37.5 12.3 40.5 14.2 44 16.4C45.6 17.5 45.8 19.5 45.6 20.5L18.5 21Z" fill="#1c2840"/><path d="M18.2 20C19 17.4 22 16.8 26 16.8C32 16.8 38 17.4 42 18.2C45 18.8 46.2 19.8 46.1 21C45.8 25 38 26.8 31 26.8C23 26.8 18.2 24 18.2 20Z" fill="#1ba6e8"/><path d="M22 17.5C25 16.2 30 15.8 34 16.5C37 17 39 18 40.5 19L38 20L24 19.5Z" fill="#1c2840"/><ellipse cx="31.5" cy="21.6" rx="7.2" ry="2.6" fill="#1c2840"/><path d="M25 16.5v2.5M27.5 15.5v3M30 15.2v3.5M32.5 15.5v3M35 16v2.5" stroke="#3ab4f0" stroke-width="0.9"/><path d="M25.5 21.5l1.5-1M28 22.5l1-2M30.5 23v-2.5M33 23l1-2M35.5 22l1.2-1M23 19.5h1.5M37.5 20h1.5" stroke="#fff" stroke-width="1"/></svg>
<svg style="left:0;top:0" width="700" height="36"><path d="M92.9 17.8L97.6 12.8L101 16.4L105.1 12.2" stroke="#fff" stroke-width="2" fill="none" stroke-linecap="round" stroke-linejoin="round"/><path d="M196.2 9.9h2v2h-2zM196.2 14h2v2h-2zM196.2 18h2v2h-2z" fill="#fff"/><path d="M199.2 9.9h9.7v2h-9.7zM199.2 14h9.7v2h-9.7zM199.2 18h9.7v2h-9.7z" fill="#d4d7de"/><g fill="#fff"><circle cx="332" cy="15" r="5.3"/><rect x="330.2" y="8" width="3.6" height="14" rx="0.6"/><rect x="330.2" y="8" width="3.6" height="14" rx="0.6" transform="rotate(60 332 15)"/><rect x="330.2" y="8" width="3.6" height="14" rx="0.6" transform="rotate(120 332 15)"/></g><circle cx="332" cy="15" r="2" fill="#1c2840"/><circle cx="470.8" cy="12" r="4.5" fill="#fff"/><circle cx="469.6" cy="10.8" r="1.7" fill="#1c2840"/><path d="M469.6 10.8L466 7.2" stroke="#1c2840" stroke-width="3.2"/><path d="M472.5 14L479.6 21" stroke="#fff" stroke-width="3" stroke-linecap="round"/><circle cx="603.8" cy="13.9" r="7.1" fill="#fff"/><path d="M605.42 8.82 L605.48 7.88 L607.12 7.88 L607.18 8.82 L608.16 9.29 L608.93 8.75 L609.95 10.04 L609.25 10.67 L609.50 11.73 L610.40 11.99 L610.03 13.60 L609.10 13.44 L608.43 14.29 L608.78 15.16 L607.30 15.88 L606.84 15.05 L605.76 15.05 L605.30 15.88 L603.82 15.16 L604.17 14.29 L603.50 13.44 L602.57 13.60 L602.20 11.99 L603.10 11.73 L603.35 10.67 L602.65 10.04 L603.67 8.75 L604.44 9.29Z" fill="#1c2840"/><circle cx="606.3" cy="11.9" r="1.7" fill="#fff"/><path d="M599.83 14.33 L599.90 13.68 L601.30 13.68 L601.37 14.33 L602.19 14.80 L602.78 14.53 L603.48 15.75 L602.95 16.13 L602.95 17.07 L603.48 17.45 L602.78 18.67 L602.19 18.40 L601.37 18.87 L601.30 19.52 L599.90 19.52 L599.83 18.87 L599.01 18.40 L598.42 18.67 L597.72 17.45 L598.25 17.07 L598.25 16.13 L597.72 15.75 L598.42 14.53 L599.01 14.80Z" fill="#1c2840"/><circle cx="600.6" cy="16.6" r="1.2" fill="#fff"/><path d="M609.5 19.5L613 23" stroke="#fff" stroke-width="1.5" stroke-linecap="round"/></svg>
<svg style="left:1164.20px;top:4.90px" width="24.00" height="24.00" viewBox="0 0 24 24"><path d="M12 22c1.1 0 2-.9 2-2h-4c0 1.1.89 2 2 2zm6-6v-5c0-3.07-1.64-5.64-4.5-6.32V4c0-.83-.67-1.5-1.5-1.5s-1.5.67-1.5 1.5v.68C7.63 5.36 6 7.92 6 11v5l-2 2v1h16v-1l-2-2z" fill="#fff"/></svg>
<svg style="left:1333.10px;top:7.90px" width="16.56" height="16.56" viewBox="0 0 24 24"><path d="M12 2C6.48 2 2 6.48 2 12s4.48 10 10 10 10-4.48 10-10S17.52 2 12 2zm-2 15l-5-5 1.41-1.41L10 14.17l7.59-7.59L19 8l-9 9z" fill="#22b14c"/></svg>
<svg style="left:1333.1px;top:7.9px" width="16.56" height="16.56" viewBox="0 0 24 24"><path d="M10 17l-5-5 1.41-1.41L10 14.17l7.59-7.59L19 8l-9 9z" fill="#1c2840"/></svg>
<svg style="left:504.40px;top:42.00px" width="24.00" height="24.00" viewBox="0 0 24 24"><path d="M10 6L8.59 7.41 13.17 12l-4.58 4.59L10 18l6-6z" fill="#222"/></svg>
<div class="a" style="left:338px;top:98px;width:171px;height:79px;background:#fff;box-shadow:0 1px 3px rgba(0,0,0,.12)"></div>
<div class="a" style="left:340px;top:100px;width:167px;height:37px;background:#f5f5f5"></div>
<div class="t" style="left:350.1px;top:109px;font-size:12px;line-height:20px;color:#333;font-weight:normal;">Retrain runs (12)</div>
<div class="t" style="left:350.1px;top:145px;font-size:12px;line-height:20px;color:#333;font-weight:normal;">Delete runs (12)</div>
<div class="a" style="left:338px;top:98px;width:171px;height:79px;border:2px solid #ff0000"></div>
<svg style="left:0;top:0" width="1440" height="779"><ellipse cx="98" cy="159.8" rx="17" ry="18" stroke="#ff0000" stroke-width="2" fill="none"/><path d="M197.6 121.5L132 144.3" stroke="#ff0000" stroke-width="2"/><path d="M124.1 147.4L131.4 139.9L134.9 149.6z" fill="#ff0000"/></svg>
</body></html>
